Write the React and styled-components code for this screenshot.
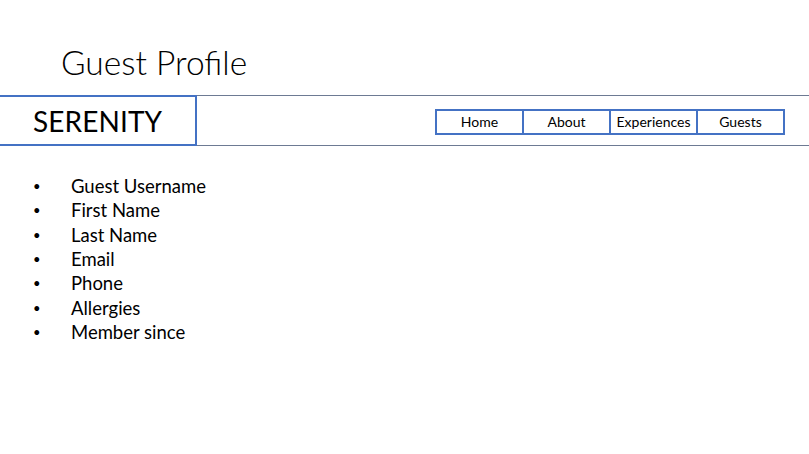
import React from 'react';
import styled, { createGlobalStyle } from 'styled-components';

const GlobalStyle = createGlobalStyle`
	body {
		margin: 0;
		background: #ffffff;
		font-family: Lato, "Open Sans", sans-serif;
		color: #000;
	}
`;

const Page = styled.div`
	width: 809px;
	height: 454px;
	overflow: hidden;
`;

const Title = styled.h1`
	margin: 0;
	padding: 46px 0 0 61px;
	height: 51px;
	box-sizing: border-box;
	font-size: 33.5px;
	font-weight: 300;
	line-height: 1;
`;

const HeaderBar = styled.div`
	display: flex;
	align-items: center;
	justify-content: space-between;
	height: 51px;
	border-top: 1px solid #6d7a93;
	border-bottom: 1px solid #6d7a93;
	box-sizing: border-box;
	margin-top: 44px;
`;

const Logo = styled.div`
	width: 197px;
	height: 51px;
	margin-top: -1px;
	margin-bottom: -1px;
	box-sizing: border-box;
	border: 2px solid #4472c4;
	border-left: none;
	display: flex;
	align-items: center;
	padding-left: 33px;
	font-size: 28px;
	letter-spacing: 0.1px;
`;

const Nav = styled.nav`
	display: flex;
	margin-right: 24px;
	border: 2px solid #4472c4;
	margin-top: 2px;
`;

const NavItem = styled.div`
	width: 85px;
	height: 22px;
	display: flex;
	align-items: center;
	justify-content: center;
	font-size: 14px;
	border-left: ${p => (p.first ? 'none' : '2px solid #4472c4')};
`;

const List = styled.ul`
	list-style: none;
	margin: 0;
	padding: 28px 0 0 0;
`;

const Item = styled.li`
	display: flex;
	align-items: center;
	height: 24.3px;
	font-size: 18.5px;

	&::before {
		content: '•';
		width: 71px;
		padding-left: 33px;
		box-sizing: border-box;
		font-size: 13px;
	}
`;

const fields = ['Guest Username', 'First Name', 'Last Name', 'Email', 'Phone', 'Allergies', 'Member since'];
const links = ['Home', 'About', 'Experiences', 'Guests'];

const App = () => {
	return (
		<Page>
			<GlobalStyle />
			<Title>Guest Profile</Title>
			<HeaderBar>
				<Logo>SERENITY</Logo>
				<Nav>
					{links.map((l, i) => <NavItem key={l} first={i === 0}>{l}</NavItem>)}
				</Nav>
			</HeaderBar>
			<List>
				{fields.map(f => <Item key={f}>{f}</Item>)}
			</List>
		</Page>
	);
};

export default App;
